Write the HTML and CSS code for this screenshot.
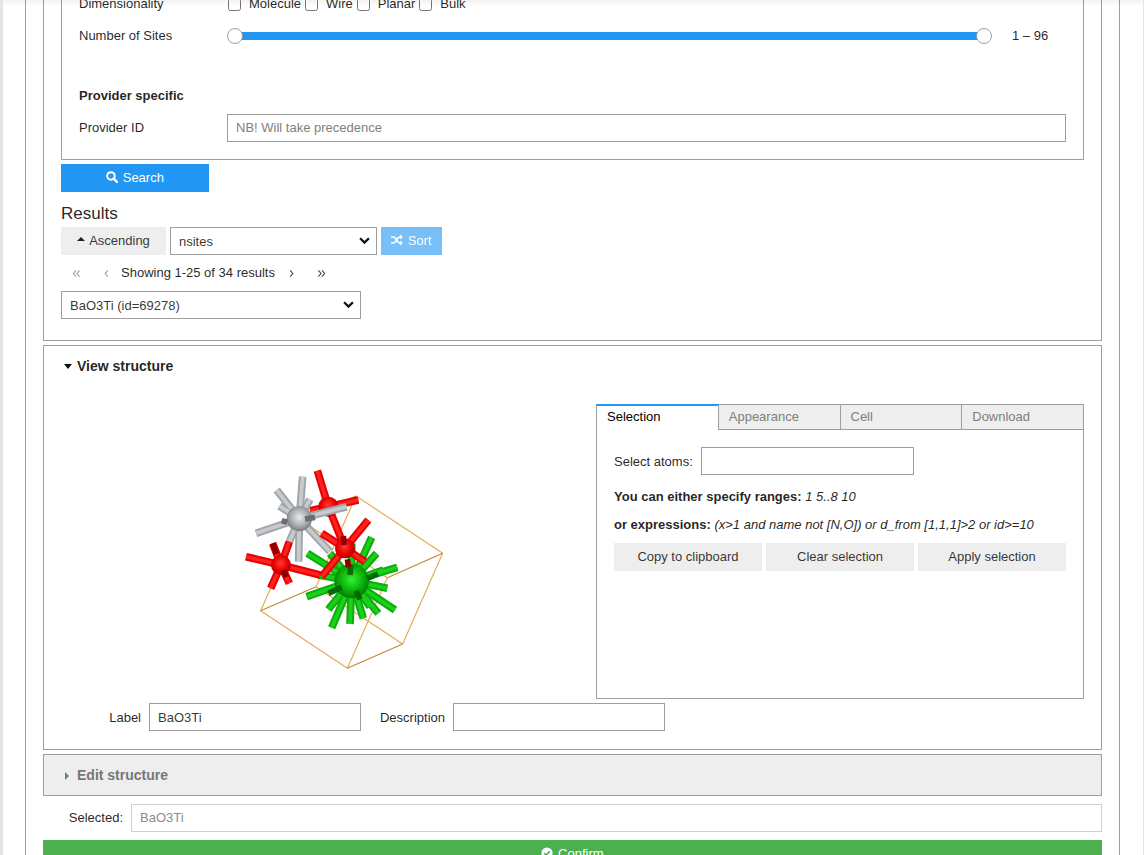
FILE: index.html
```html
<!DOCTYPE html>
<html lang="en">
<head>
  <meta charset="UTF-8" />
  <meta name="viewport" content="width=device-width, initial-scale=1.0"/>
  <title>Structure chooser</title>
  <link rel="stylesheet" href="styles.css">
</head>
<body>
  <div class="top-shade"></div>

  <div class="page">
    <div class="cell">

      <div class="box query-box">
        <div class="filters">
          <div class="row">
            <span class="row-label">Dimensionality</span>
            <div class="checks">
              <label class="check"><input type="checkbox"> Molecule</label>
              <label class="check"><input type="checkbox"> Wire</label>
              <label class="check"><input type="checkbox"> Planar</label>
              <label class="check"><input type="checkbox"> Bulk</label>
            </div>
          </div>
          <div class="row">
            <span class="row-label">Number of Sites</span>
            <div class="slider">
              <div class="slider-track"></div>
              <span class="slider-handle handle-min"></span>
              <span class="slider-handle handle-max"></span>
            </div>
            <span class="slider-value">1 – 96</span>
          </div>
          <div class="row row-spacer"></div>
          <div class="row"><b class="row-title">Provider specific</b></div>
          <div class="row">
            <span class="row-label">Provider ID</span>
            <input class="text-input provider-input" type="text" placeholder="NB! Will take precedence">
          </div>
        </div>

        <button class="btn btn-primary search-btn">
          <svg class="icon" viewBox="0 0 14 14"><circle cx="5.8" cy="5.8" r="4.4" fill="none" stroke="#fff" stroke-width="2.3"/><path d="M9 9l3.800 3.800" stroke="#fff" stroke-width="2.800" stroke-linecap="round"/></svg>
          Search
        </button>

        <div class="results-title">Results</div>
        <div class="sort-row">
          <button class="btn btn-grey asc-btn"><span class="caret-up"></span>Ascending</button>
          <select class="select sort-select"><option>nsites</option></select>
          <button class="btn btn-primary sort-btn">
            <svg class="icon" viewBox="0 0 14 14"><path d="M0 3.500h3c3 0 4 7 7 7h1M0 10.500h3c3 0 4-7 7-7h1" fill="none" stroke="#fff" stroke-width="2"/><path d="M10.500 .5l3.500 3-3.500 3zM10.500 7.500l3.500 3-3.500 3z" fill="#fff"/></svg>
            Sort
          </button>
        </div>

        <div class="pager">
          <span class="pager-btn off"><svg viewBox="0 0 10 10"><path d="M4.500 1.500L1.500 5l3 3.500M8.500 1.500L5.500 5l3 3.500"/></svg></span>
          <span class="pager-btn off"><svg viewBox="0 0 10 10"><path d="M6.500 1.500L3.500 5l3 3.500"/></svg></span>
          <span class="pager-text">Showing 1-25 of 34 results</span>
          <span class="pager-btn"><svg viewBox="0 0 10 10"><path d="M3.500 1.500L6.500 5l-3 3.500"/></svg></span>
          <span class="pager-btn"><svg viewBox="0 0 10 10"><path d="M1.500 1.500L4.500 5l-3 3.500M5.500 1.500L8.500 5l-3 3.500"/></svg></span>
        </div>

        <select class="select result-select"><option>BaO3Ti (id=69278)</option></select>
      </div>

      <div class="box view-box">
        <div class="section-head"><span class="caret-down"></span>View structure</div>

        <div class="view-body">
          <div class="viewer">
            <svg class="molecule" viewBox="0 0 690 690">
              <defs>
                <radialGradient id="ball-grey" cx="50%" cy="45%" r="58%"><stop offset="0" stop-color="#e8eaec"/><stop offset=".6" stop-color="#a8abae"/><stop offset="1" stop-color="#6f7275"/></radialGradient>
                <radialGradient id="ball-red" cx="48%" cy="42%" r="60%"><stop offset="0" stop-color="#ff3a3a"/><stop offset=".6" stop-color="#e80000"/><stop offset="1" stop-color="#a80000"/></radialGradient>
                <radialGradient id="ball-green" cx="50%" cy="45%" r="58%"><stop offset="0" stop-color="#34f034"/><stop offset=".6" stop-color="#08b008"/><stop offset="1" stop-color="#057005"/></radialGradient>
                <g id="red-a">
                  <line x1="295" y1="170" x2="262" y2="62"/><line x1="295" y1="170" x2="385" y2="150"/>
                  <line x1="295" y1="170" x2="240" y2="182"/><line x1="295" y1="170" x2="345" y2="295"/>
                </g>
                <g id="grey-a">
                  <line x1="208" y1="206" x2="218" y2="80"/><line x1="208" y1="206" x2="140" y2="120"/>
                  <line x1="208" y1="206" x2="148" y2="168"/><line x1="208" y1="206" x2="240" y2="148"/>
                  <line x1="208" y1="206" x2="350" y2="170"/><line x1="208" y1="206" x2="78" y2="250"/>
                  <line x1="208" y1="206" x2="206" y2="335"/><line x1="208" y1="206" x2="178" y2="275"/>
                  <line x1="208" y1="206" x2="300" y2="305"/>
                </g>
                <g id="green-a">
                  <line x1="365" y1="393" x2="425" y2="262"/><line x1="365" y1="393" x2="440" y2="310"/>
                  <line x1="365" y1="393" x2="502" y2="352"/><line x1="365" y1="393" x2="472" y2="415"/>
                  <line x1="365" y1="393" x2="495" y2="480"/><line x1="365" y1="393" x2="445" y2="490"/>
                  <line x1="365" y1="393" x2="420" y2="470"/><line x1="365" y1="393" x2="400" y2="505"/>
                  <line x1="365" y1="393" x2="360" y2="522"/><line x1="365" y1="393" x2="305" y2="533"/>
                  <line x1="365" y1="393" x2="295" y2="478"/><line x1="365" y1="393" x2="230" y2="440"/>
                  <line x1="365" y1="393" x2="232" y2="310"/><line x1="365" y1="393" x2="265" y2="375"/>
                  <line x1="365" y1="393" x2="365" y2="280"/><line x1="365" y1="393" x2="300" y2="310"/>
                  <line x1="365" y1="393" x2="460" y2="360"/>
                </g>
                <g id="red-c">
                  <line x1="153" y1="345" x2="48" y2="320"/><line x1="153" y1="345" x2="270" y2="375"/>
                  <line x1="153" y1="345" x2="178" y2="275"/><line x1="153" y1="345" x2="122" y2="415"/>
                  <line x1="153" y1="345" x2="178" y2="400"/><line x1="153" y1="345" x2="128" y2="280"/>
                </g>
                <g id="red-b">
                  <line x1="345" y1="295" x2="415" y2="210"/><line x1="345" y1="295" x2="275" y2="250"/>
                  <line x1="345" y1="295" x2="405" y2="335"/><line x1="345" y1="295" x2="275" y2="380"/>
                </g>
              </defs>

              <g class="cell-frame">
                <path d="M92 482L352 655M518 582L258 410ZM212 210L472 383M378 138L638 310M92 482L212 210M352 655L472 383M518 582L638 310M258 410L378 138"/>
                <path class="frame-dark" d="M352 655L518 582M258 410L92 482M472 383L638 310M212 210L378 138"/>
              </g>

              <g class="stick red"><use href="#red-a"/></g>
              <g class="stick-hl red"><use href="#red-a"/></g>
              <circle cx="295" cy="170" r="30" fill="url(#ball-red)"/>

              <g class="stick grey"><use href="#grey-a"/></g>
              <g class="stick-hl grey"><use href="#grey-a"/></g>
              <circle cx="208" cy="206" r="38" fill="url(#ball-grey)"/>
              <g class="stub grey-dark"><line x1="225" y1="207" x2="255" y2="202"/><line x1="155" y1="212" x2="172" y2="217"/></g>

              <g class="stick green"><use href="#green-a"/></g>
              <g class="stick-hl green"><use href="#green-a"/></g>
              <circle cx="365" cy="393" r="52" fill="url(#ball-green)"/>
              <g class="stub green-dark"><line x1="378" y1="422" x2="390" y2="448"/><line x1="362" y1="345" x2="360" y2="375"/><line x1="412" y1="385" x2="444" y2="372"/><line x1="295" y1="430" x2="335" y2="412"/></g>

              <g class="stick red"><use href="#red-c"/></g>
              <g class="stick-hl red"><use href="#red-c"/></g>
              <circle cx="153" cy="345" r="30" fill="url(#ball-red)"/>
              <g class="stub red-dark"><line x1="128" y1="280" x2="140" y2="312"/><line x1="160" y1="360" x2="168" y2="382"/></g>

              <g class="stick red"><use href="#red-b"/></g>
              <g class="stick-hl red"><use href="#red-b"/></g>
              <circle cx="345" cy="295" r="30" fill="url(#ball-red)"/>
              <g class="stub red-dark"><line x1="340" y1="258" x2="342" y2="285"/><line x1="352" y1="328" x2="356" y2="352"/></g>
            </svg>
          </div>

          <div class="tabs">
            <div class="tab-bar">
              <span class="tab active">Selection</span>
              <span class="tab">Appearance</span>
              <span class="tab">Cell</span>
              <span class="tab">Download</span>
            </div>
            <div class="tab-panel">
              <div class="select-row">
                <span>Select atoms:</span>
                <input class="text-input atoms-input" type="text">
              </div>
              <p class="hint"><b>You can either specify ranges:</b> <i>1 5..8 10</i></p>
              <p class="hint"><b>or expressions:</b> <i>(x&gt;1 and name not [N,O]) or d_from [1,1,1]&gt;2 or id&gt;=10</i></p>
              <div class="panel-btns">
                <button class="btn btn-grey">Copy to clipboard</button>
                <button class="btn btn-grey">Clear selection</button>
                <button class="btn btn-grey">Apply selection</button>
              </div>
            </div>
          </div>
        </div>

        <div class="meta-row">
          <div class="meta-item">
            <span class="meta-label">Label</span>
            <input class="text-input" type="text" value="BaO3Ti">
          </div>
          <div class="meta-item">
            <span class="meta-label">Description</span>
            <input class="text-input" type="text">
          </div>
        </div>
      </div>

      <div class="box edit-box">
        <span class="caret-right"></span>Edit structure
      </div>

      <div class="selected-row">
        <span class="meta-label">Selected:</span>
        <input class="text-input selected-input" type="text" value="BaO3Ti" disabled>
      </div>

      <button class="btn confirm-btn">
        <svg class="icon" viewBox="0 0 14 14"><circle cx="7" cy="7" r="6.500" fill="#fff"/><path d="M3.800 7.200l2.300 2.300 4.200-4.400" fill="none" stroke="#4caf50" stroke-width="1.800"/></svg>
        Confirm
      </button>

    </div>
  </div>
</body>
</html>
```

FILE: styles.css
```css
html, body {
  margin: 0;
  height: 855px;
  overflow: hidden;
}

body {
  font-family: "Liberation Sans", Arial, sans-serif;
  font-size: 13px;
  color: rgba(0,0,0,0.87);
  background: #fff;
  border-left: 3px solid #e4e4e4;
  border-right: 1px solid #e4e4e4;
  box-sizing: border-box;
}

.top-shade {
  position: absolute;
  top: 0;
  left: 3px;
  right: 1px;
  height: 6px;
  background: linear-gradient(to bottom, rgba(0,0,0,0.05), rgba(0,0,0,0));
}

.page {
  margin-top: -40px;
  padding-left: 22px;
}

.cell {
  width: 1095px;
  box-sizing: border-box;
  border-left: 1px solid #9e9e9e;
  border-right: 1px solid #9e9e9e;
  padding: 0 17px;
  height: 900px;
}

.box {
  border: 1px solid #9e9e9e;
  box-sizing: border-box;
}

.query-box {
  padding: 8px 17px 21px;
  margin-bottom: 4px;
}

.filters {
  border: 1px solid #9e9e9e;
  padding: 20px 17px 17px;
  display: flex;
  flex-direction: column;
  gap: 4px;
}

.row {
  display: flex;
  align-items: center;
  height: 28px;
}

.row-spacer {
  height: 24px;
}

.row-label, .row-title {
  padding-bottom: 2px;
}

.row-label {
  width: 148px;
  flex: none;
}

.checks {
  display: flex;
  gap: 4px;
  padding-left: 1px;
}

.check {
  display: flex;
  align-items: center;
  gap: 8px;
  padding-bottom: 2px;
}

.check input {
  margin: 2px 0 0;
  width: 13px;
  height: 13px;
}

.slider {
  position: relative;
  width: 765px;
  height: 16px;
  flex: none;
}

.slider-track {
  position: absolute;
  left: 8px;
  right: 8px;
  top: 4px;
  height: 8px;
  background: #2196f3;
}

.slider-handle {
  position: absolute;
  top: 0;
  width: 16px;
  height: 16px;
  box-sizing: border-box;
  background: #fff;
  border: 1px solid #9e9e9e;
  border-radius: 50%;
}

.handle-min { left: 0; }
.handle-max { right: 0; }

.slider-value {
  margin-left: 20px;
  padding-bottom: 2px;
}

.text-input {
  font: inherit;
  width: 212px;
  height: 28px;
  box-sizing: border-box;
  padding: 0 8px;
  border: 1px solid #9e9e9e;
  border-radius: 0;
  background: #fff;
  color: rgba(0,0,0,0.8);
  outline: none;
}

.text-input::placeholder {
  color: #808080;
}

.provider-input {
  width: 839px;
  padding-bottom: 2px;
}

.atoms-input {
  width: 213px;
}

.btn {
  font: inherit;
  height: 28px;
  border: none;
  padding: 0 8px 2px;
  color: rgba(0,0,0,0.8);
  cursor: pointer;
}

.btn-primary {
  background: #2196f3;
  color: #fff;
}

.btn-grey {
  background: #eee;
}

.icon {
  width: 12px;
  height: 12px;
  vertical-align: -1px;
  margin-right: 1px;
}

.search-btn {
  display: block;
  width: 148px;
  margin-top: 4px;
}

.results-title {
  font-size: 17px;
  line-height: 27px;
  margin-top: 8px;
  color: rgba(0,0,0,0.87);
}

.sort-row {
  display: flex;
  gap: 4px;
}

.asc-btn {
  width: 105px;
}

.caret-up {
  display: inline-block;
  border-left: 4px solid transparent;
  border-right: 4px solid transparent;
  border-bottom: 4px solid #222;
  margin-right: 4px;
  vertical-align: 4px;
}

.select {
  font: inherit;
  height: 28px;
  box-sizing: border-box;
  padding: 0 8px;
  border: 1px solid #9e9e9e;
  border-radius: 0;
  background: #fff url("data:image/svg+xml,%3Csvg xmlns='http://www.w3.org/2000/svg' viewBox='0 0 10 7'%3E%3Cpath d='M1 1l4 4 4-4' fill='none' stroke='%23111' stroke-width='2.100'/%3E%3C/svg%3E") no-repeat right 6px center / 11px 8px;
  color: rgba(0,0,0,0.8);
  outline: none;
  appearance: none;
  -webkit-appearance: none;
}

.sort-select {
  width: 207px;
}

.sort-btn {
  width: 61px;
  opacity: 0.6;
}

.pager {
  display: flex;
  align-items: center;
  height: 28px;
  margin: 4px 0;
}

.pager-text {
  width: 155px;
  flex: none;
  padding-bottom: 2px;
}

.pager-btn {
  width: 30px;
  flex: none;
  display: flex;
  justify-content: center;
}

.pager-btn svg {
  width: 9px;
  height: 9px;
  fill: none;
  stroke: #444;
  stroke-width: 1.200;
}

.pager-btn.off svg {
  stroke: #a0a0a0;
}

.result-select {
  display: block;
  width: 300px;
}

.view-box {
  height: 405px;
  margin-bottom: 4px;
}

.section-head {
  height: 40px;
  line-height: 40px;
  padding-left: 20px;
  font-size: 14px;
  font-weight: bold;
  margin-bottom: 18px;
}

.caret-down {
  display: inline-block;
  border-left: 4.500px solid transparent;
  border-right: 4.500px solid transparent;
  border-top: 5px solid #111;
  margin-right: 5px;
  vertical-align: 2px;
}

.view-body {
  display: flex;
  height: 295px;
}

.viewer {
  width: 552px;
  flex: none;
  box-sizing: border-box;
  padding: 46px 0 0 186px;
}

.molecule {
  display: block;
  width: 230px;
  height: 230px;
  filter: blur(0.4px);
}

.cell-frame path {
  fill: none;
  stroke: #e4ab55;
  stroke-width: 3.500;
}

.cell-frame .frame-dark {
  stroke: #bd8a38;
}

.stick { stroke-width: 23; }
.stick-hl { stroke-width: 11; }
.stub { stroke-width: 17; }

.stick.red { stroke: #e60000; }
.stick-hl.red { stroke: #ff2020; }
.stick.grey { stroke: #a2a6aa; }
.stick-hl.grey { stroke: #c8cbce; }
.stick.green { stroke: #0cac0c; }
.stick-hl.green { stroke: #1ad01a; }

.stub.red-dark { stroke: #8c0000; }
.stub.grey-dark { stroke: #6a6e72; }
.stub.green-dark { stroke: #056a05; }

.tabs {
  width: 488px;
  flex: none;
  display: flex;
  flex-direction: column;
}

.tab-bar {
  display: flex;
  height: 26px;
}

.tab {
  flex: 1;
  box-sizing: border-box;
  padding: 0 10px;
  line-height: 24px;
  background: #eee;
  color: #808080;
  border: 1px solid #9e9e9e;
  border-left: none;
}

.tab:first-child {
  border-left: 1px solid #9e9e9e;
}

.tab.active {
  background: #fff;
  color: rgba(0,0,0,1);
  border-top: 2px solid #2196f3;
  border-bottom: none;
  line-height: 21px;
}

.tab-panel {
  flex: 1;
  border: 1px solid #9e9e9e;
  border-top: none;
  padding: 17px 17px 0;
}

.select-row {
  display: flex;
  align-items: center;
  gap: 8px;
  margin-bottom: 8px;
}

.hint {
  margin: 0;
  line-height: 28px;
}

.panel-btns {
  display: grid;
  grid-template-columns: repeat(3, 148px);
  gap: 4px;
  margin-top: 4px;
}

.meta-row {
  display: flex;
  gap: 4px;
  padding-left: 17px;
  margin-top: 4px;
}

.meta-item {
  display: flex;
  align-items: center;
  gap: 8px;
}

.meta-label {
  width: 80px;
  text-align: right;
  flex: none;
}

.edit-box {
  height: 42px;
  line-height: 40px;
  padding-left: 21px;
  background: #eee;
  color: #777;
  font-size: 14px;
  font-weight: bold;
}

.caret-right {
  display: inline-block;
  border-top: 4px solid transparent;
  border-bottom: 4px solid transparent;
  border-left: 4.500px solid #777;
  margin-right: 8px;
  vertical-align: 0;
}

.selected-row {
  display: flex;
  align-items: center;
  gap: 8px;
  margin: 8px 0;
}

.selected-row .meta-label {
  padding-bottom: 2px;
}

.selected-row .text-input {
  flex: 1;
  width: auto;
  padding-bottom: 2px;
  border-color: #cfcfcf;
  color: #8c8c8c;
  background: #fff;
}

.confirm-btn {
  display: block;
  width: 100%;
  background: #4caf50;
  color: #fff;
}
```
